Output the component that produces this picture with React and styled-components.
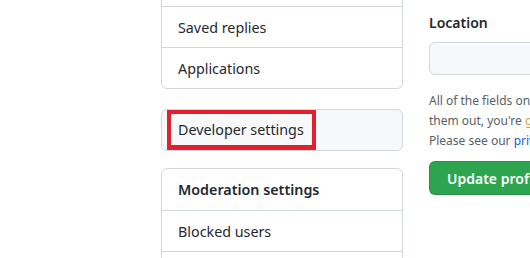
import React from 'react';
import styled, { createGlobalStyle } from 'styled-components';

const GlobalStyle = createGlobalStyle`
  html, body {
    margin: 0;
    padding: 0;
    background: #ffffff;
    overflow: hidden;
  }
  body {
    font-family: "Noto Sans", "Liberation Sans", sans-serif;
    color: #24292f;
  }
`;

const Page = styled.div`
  display: flex;
  align-items: flex-start;
  gap: 26px;
  width: 530px;
  height: 258px;
  padding-left: 161px;
  box-sizing: border-box;
  overflow: hidden;
`;

const Sidebar = styled.nav`
  flex: 0 0 242px;
  display: flex;
  flex-direction: column;
  margin-top: -35px;
`;

const Card = styled.div`
  margin-top: ${(p) => p.spacing || 0}px;
  border: 1px solid #d0d7de;
  border-radius: 6px;
  background: ${(p) => (p.selected ? '#f6f8fa' : '#ffffff')};
  overflow: hidden;
`;

const Row = styled.div`
  display: flex;
  align-items: center;
  height: 40px;
  padding: 0 16px;
  font-size: 14.3px;
  font-weight: ${(p) => (p.heading ? 600 : 400)};
  color: #24292f;
  white-space: nowrap;
  & + & {
    border-top: 1px solid #d0d7de;
  }
  &:first-child {
    height: ${(p) => (p.heading ? '41px' : '40px')};
  }
`;

const MarkedRow = styled(Row)`
  padding-left: 5px;
  align-items: stretch;
`;

const Marker = styled.span`
  display: flex;
  align-items: center;
  padding: 0 8px 0 7px;
  border: 4px solid #e3202e;
  border-bottom-width: 5px;
  box-sizing: border-box;
`;

const Main = styled.main`
  flex: 0 0 480px;
  padding-top: 13px;
`;

const Label = styled.label`
  display: block;
  font-size: 14px;
  line-height: 20px;
  font-weight: 600;
  color: #24292f;
  margin-bottom: 9px;
`;

const Input = styled.div`
  width: 440px;
  height: 33px;
  border: 1px solid #d0d7de;
  border-radius: 6px;
  background: #f6f8fa;
  box-sizing: border-box;
`;

const Note = styled.p`
  margin: 16px 0 0;
  font-size: 12px;
  line-height: 20px;
  color: #57606a;
  white-space: nowrap;
`;

const Tint = styled.span`
  color: ${(p) => p.color};
`;

const Button = styled.button`
  margin-top: 10px;
  height: 34px;
  padding: 0 17px;
  border: 1px solid rgba(27, 31, 36, 0.15);
  border-radius: 6px;
  background: #2da44e;
  color: #ffffff;
  font-family: inherit;
  font-size: 14px;
  font-weight: 600;
  white-space: nowrap;
`;

export default function App() {
  return (
    <>
      <GlobalStyle />
      <Page>
        <Sidebar>
          <Card>
            <Row>Scheduled reminders</Row>
            <Row>Saved replies</Row>
            <Row>Applications</Row>
          </Card>
          <Card selected spacing={20}>
            <MarkedRow>
              <Marker>Developer settings</Marker>
            </MarkedRow>
          </Card>
          <Card spacing={17}>
            <Row heading>Moderation settings</Row>
            <Row>Blocked users</Row>
            <Row>Interaction limits</Row>
          </Card>
        </Sidebar>
        <Main>
          <Label>Location</Label>
          <Input />
          <Note>
            All of the fields on this page are optional and can be deleted at
            any time, and by filling
            <br />
            them out, you're <Tint color="#c9a24a">giving</Tint> us consent to
            share this data wherever your user profile appears.
            <br />
            Please see our <Tint color="#0969da">privacy statement</Tint> to
            learn more about how we use this information.
          </Note>
          <Button>Update profile</Button>
        </Main>
      </Page>
    </>
  );
}
